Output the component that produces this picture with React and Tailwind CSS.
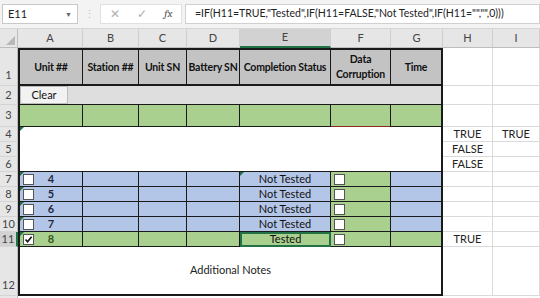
import React from "react";

const font = { fontFamily: "Lato, 'Open Sans', sans-serif" };

function Tri() {
  // маленький зелёный треугольник ошибки в углу ячейки
  return <span className="absolute left-0 top-0 w-0 h-0 border-t-[4px] border-t-[#1e7145] border-r-[4px] border-r-transparent" />;
}

function Box({ checked }) {
  return (
    <span className="w-[11px] h-[11px] bg-white border border-[#555] flex items-center justify-center shrink-0">
      {checked && (
        <svg width="9" height="9" viewBox="0 0 9 9">
          <path d="M1.5 4.5 L3.6 6.8 L7.6 1.8" fill="none" stroke="#111" strokeWidth="1.6" />
        </svg>
      )}
    </span>
  );
}

const colHeads = ["A", "B", "C", "D", "E", "F", "G", "H", "I"];

function RowHead({ n, active, end }) {
  return (
    <div
      className={`flex justify-center text-[11px] text-[#444] border-b border-[#d4d4d4] ${end ? "items-end pb-[2px]" : "items-center"} ${
        active ? "bg-[#d2d2d2] border-r-2 border-r-[#217346]" : "bg-[#e6e6e6] border-r border-r-[#bdbdbd]"
      }`}
    >
      {n}
    </div>
  );
}

function Blank({ text }) {
  return (
    <div className="bg-white border-r border-b border-[#dadada] flex items-center justify-center text-[11px] text-[#222]">
      {text}
    </div>
  );
}

function DataRow({ n, num, status, done }) {
  const bg = done ? "bg-[#a9d08e]" : "bg-[#b4c6e7]";
  const cell = `${bg} border-r border-b border-[#1a1a1a]`;
  return (
    <>
      <RowHead n={n} active={done} />
      <div className={`${cell} border-l-2 relative flex items-center pl-[3px]`}>
        <Tri />
        <Box checked={done} />
        <span className={`flex-1 text-center pr-[14px] text-[11px] font-bold ${done ? "text-[#375623]" : "text-[#1f2a44]"}`}>{num}</span>
      </div>
      <div className={cell} />
      <div className={cell} />
      <div className={cell} />
      {done ? (
        <div className="bg-[#a9d08e] border-2 border-[#217346] flex items-center justify-center text-[11px] text-[#111]">Tested</div>
      ) : (
        <div className={`${cell} relative flex items-center justify-center text-[11px] text-[#111]`}>
          {n === 7 && <Tri />}
          {status}
        </div>
      )}
      <div className="bg-[#a9d08e] border-r border-b border-[#1a1a1a] flex items-center pl-[3px]">
        <Box />
      </div>
      <div className={`${bg} border-r-2 border-b border-[#1a1a1a]`} />
      <Blank text={done ? "TRUE" : ""} />
      <Blank />
    </>
  );
}

export default function App() {
  const head = "bg-[#c3c3c3] border-t-2 border-b-2 border-r border-[#1a1a1a] flex items-center justify-center text-center whitespace-nowrap overflow-hidden text-[10.5px] tracking-[-0.2px] font-bold text-[#111] leading-[15px]";
  const green = "bg-[#a9d08e] border-r border-b border-[#1a1a1a]";
  return (
    <div className="w-[540px] h-[298px] bg-white overflow-hidden" style={font}>
      {/* строка формул */}
      <div className="h-[29px] bg-[#f3f3f3] flex items-center pl-[2px] pr-0 gap-0 border-b border-[#d6d6d6]">
        <div className="w-[76px] h-[20px] bg-white border border-[#c8c8c8] flex items-center justify-between px-[5px] text-[11px] text-[#222]">
          <span>E11</span>
          <span className="text-[7px] text-[#666]">▼</span>
        </div>
        <div className="w-[22px] flex justify-center text-[#c0c0c0] text-[11px]">⋮</div>
        <div className="w-[82px] h-[20px] bg-white border border-[#e0e0e0] flex items-center justify-around text-[#b0b0b0] text-[12px]">
          <span>✕</span>
          <span>✓</span>
          <span className="italic text-[#555] font-serif text-[11px]">fx</span>
        </div>
        <div className="flex-1 h-[20px] ml-[3px] bg-white border border-[#d0d0d0] flex items-center pl-[9px] text-[10.5px] text-[#222] whitespace-nowrap overflow-hidden">
          =IF(H11=TRUE,"Tested",IF(H11=FALSE,"Not Tested",IF(H11="","",0)))
        </div>
      </div>

      {/* сетка листа */}
      <div className="grid grid-cols-[18px_65px_56px_48px_53px_91px_60px_52px_50px_47px] grid-rows-[19px_38px_19px_22px_15px_15px_15px_15px_15px_15px_15px_15px_49px_10px]">
        <div className="bg-[#e6e6e6] border-r border-b border-[#bdbdbd] flex items-end justify-end p-[2px]">
          <span className="w-0 h-0 border-l-[9px] border-l-transparent border-b-[9px] border-b-[#b8b8b8]" />
        </div>
        {colHeads.map((c) => (
          <div
            key={c}
            className={`flex items-center justify-center text-[11px] text-[#444] border-r border-[#cfcfcf] ${
              c === "E" ? "bg-[#d2d2d2] border-b-2 border-b-[#217346]" : "bg-[#e6e6e6] border-b border-b-[#bdbdbd]"
            }`}
          >
            {c}
          </div>
        ))}

        {/* строка 1 */}
        <RowHead n={1} end />
        <div className={`${head} border-l-2`}>Unit ##</div>
        <div className={head}>Station ##</div>
        <div className={head}>Unit SN</div>
        <div className={head}>Battery SN</div>
        <div className={head}>Completion Status</div>
        <div className={head}>Data<br />Corruption</div>
        <div className={`${head} border-r-2`}>Time</div>
        <Blank />
        <Blank />

        {/* строка 2 */}
        <RowHead n={2} />
        <div className="col-span-7 bg-[#dedede] border-l-2 border-r-2 border-b border-[#1a1a1a] flex">
          <div className="w-[48px] bg-[#f2f2f2] border border-[#bdbdbd] flex items-center justify-center text-[11px] text-[#111]">
            Clear
          </div>
        </div>
        <Blank />
        <Blank />

        {/* строка 3 */}
        <RowHead n={3} />
        <div className={`${green} border-l-2`} />
        <div className={green} />
        <div className={green} />
        <div className={green} />
        <div className={green} />
        <div className="bg-[#a9d08e] border-r border-b border-[#1a1a1a] border-b-[#8b2a1a]" />
        <div className={`${green} border-r-2`} />
        <Blank />
        <Blank />

        {/* строки 4-6 */}
        <RowHead n={4} />
        <div className="col-span-7 row-span-3 bg-white border-l-2 border-r-2 border-b border-[#1a1a1a] relative">
          <Tri />
        </div>
        <Blank text="TRUE" />
        <Blank text="TRUE" />
        <RowHead n={5} />
        <Blank text="FALSE" />
        <Blank />
        <RowHead n={6} />
        <Blank text="FALSE" />
        <Blank />

        <DataRow n={7} num="4" status="Not Tested" />
        <DataRow n={8} num="5" status="Not Tested" />
        <DataRow n={9} num="6" status="Not Tested" />
        <DataRow n={10} num="7" status="Not Tested" />
        <DataRow n={11} num="8" done />

        {/* строка 12 */}
        <RowHead n={12} end />
        <div className="col-span-7 bg-white border-l-2 border-r-2 border-b-2 border-[#1a1a1a] flex items-center justify-center text-[11px] text-[#222]">
          Additional Notes
        </div>
        <Blank />
        <Blank />

        <div className="bg-[#e6e6e6] border-r border-[#bdbdbd]" />
        <div className="col-span-9 bg-white" />
      </div>
    </div>
  );
}
